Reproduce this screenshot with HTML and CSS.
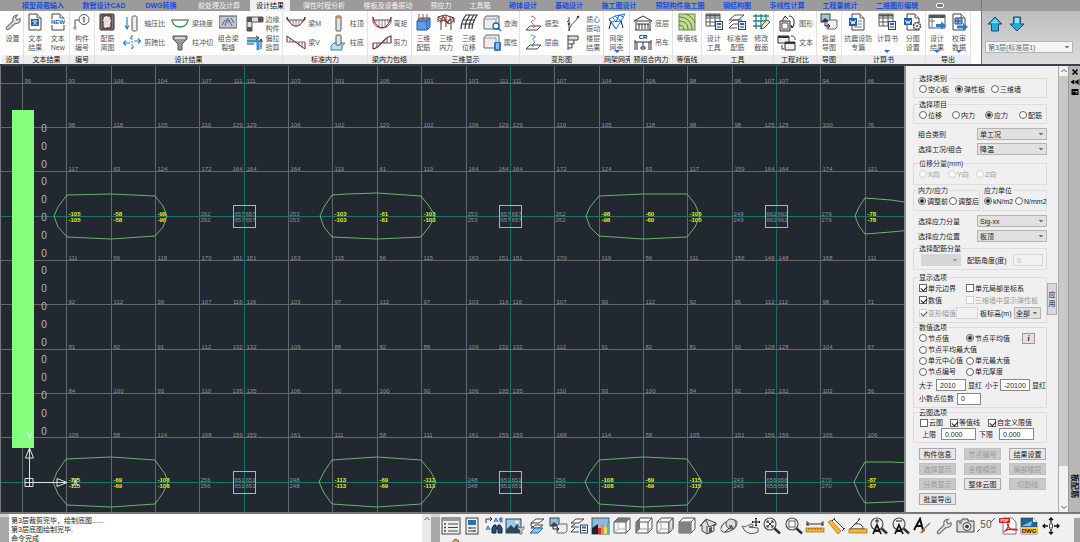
FILE: index.html
```html
<!DOCTYPE html>
<html lang="zh-CN">
<head>
<meta charset="utf-8">
<title>设计结果</title>
<link rel="stylesheet" href="styles.css">
</head>
<body>
<svg class="defs" aria-hidden="true">
  <symbol id="wrench" viewBox="0 0 18 18"><path d="M2.5 14.5 9 8C8 5 10 2 13.500 2L11.500 4.500 13 7 16 5.500C17 8.500 14.500 11 11 10.500L4.500 16.500C3 17 1.500 16 2.500 14.500Z" fill="#e4e4e4" stroke="#777" stroke-width="1.200"/></symbol>
  <symbol id="beam" viewBox="0 0 20 17"><path d="M1 5H19" stroke="#555" stroke-width="1"/><path d="M4 5V8M7 5V11M10 5V12M13 5V11M16 5V8" stroke="#667" stroke-width=".8"/></symbol>
  <symbol id="folio" viewBox="0 0 18 18"><path d="M3 1H11L15 5V17H3Z" fill="#fff" stroke="#444"/><path d="M11 1V5H15" fill="#dde" stroke="#444" stroke-width=".8"/></symbol>
  <symbol id="book" viewBox="0 0 8 9"><rect x=".5" y=".5" width="7" height="8" fill="#e8eef7" stroke="#345"/><path d="M2 3H6" stroke="#246bc0" stroke-width="2"/><path d="M2 6H6" stroke="#345"/></symbol>
  <symbol id="cube" viewBox="0 0 20 18"><path d="M2 5 6 1H18V12L14 16H2Z" fill="#f8f8f8" stroke="#555" stroke-linejoin="round"/><path d="M2 5H14V16M14 5 18 1" fill="none" stroke="#555"/></symbol>
  <symbol id="lens" viewBox="0 0 20 18"><path d="M12 11 18 16.500" stroke="#333" stroke-width="2.500"/><circle cx="8" cy="7" r="6" fill="#eee" stroke="#555" stroke-width="1.200"/></symbol>
</svg>

<header class="top">
  <div class="top-main">
    <nav class="tabs">
      <a href="#" class="w62 blue">模型荷载输入</a><a href="#" class="w60 blue">数智设计CAD</a><a href="#" class="w54 blue">DWG转换</a><a href="#" class="w62">前处理及计算</a><a href="#" class="w40 active">设计结果</a><a href="#" class="w68">弹性时程分析</a><a href="#" class="w60">楼板及设备振动</a><a href="#" class="w46">预应力</a><a href="#" class="w32">工具箱</a><a href="#" class="w54 blue">砌体设计</a><a href="#" class="w38 blue">基础设计</a><a href="#" class="w62 blue">施工图设计</a><a href="#" class="w60 blue">预制构件施工图</a><a href="#" class="w54 blue">钢结构图</a><a href="#" class="w46 blue">非线性计算</a><a href="#" class="w60 blue">工程量统计</a><a href="#" class="w54 blue">二维图形编辑</a><button class="tabmenu" aria-label="选项卡菜单"></button>
    </nav>
    <div class="ribbon">
      <section class="g g22"><div class="items">
        <button class="big"><svg viewBox="0 0 18 18"><use href="#wrench"/></svg>设置</button>
      </div><h2>设置</h2></section>

      <section class="g g46"><div class="items">
        <button class="big"><svg viewBox="0 0 18 18"><use href="#folio"/><rect x="5" y="6" width="8" height="7" fill="#1f5fae"/><path d="M6.500 8H11.500M9 7V8M7 12 11 8.500M7 8.500 11 12" stroke="#fff" stroke-width=".8"/></svg>文本<br>结果</button>
        <button class="big"><svg viewBox="0 0 18 18"><use href="#folio"/><rect x="1" y="6" width="16" height="6" fill="#fff"/><text x="9" y="11" class="newtx">NEW</text></svg>文本<br>New</button>
      </div><h2>文本结果</h2></section>

      <section class="g g25"><div class="items">
        <button class="big"><svg viewBox="0 0 18 18"><circle cx="11" cy="6.500" r="5" fill="#fff" stroke="#555"/><path d="M9.500 5 11 4V9.500" fill="none" stroke="#333"/><path d="M6 7H2V16" fill="none" stroke="#555"/><circle cx="2" cy="15" r="1.300" fill="#fff" stroke="#555" stroke-width=".7"/></svg>构件<br>编号</button>
      </div><h2>编号</h2></section>

      <section class="g g188"><div class="items">
        <button class="big"><svg viewBox="0 0 18 18"><rect x="2" y="1" width="14" height="16" rx="1" fill="#777" stroke="#333"/><rect x="5" y="3" width="8" height="12" fill="#ddd" stroke="#702020" stroke-width="1.200"/><path d="M5 8 9 3M7 15 13 7" stroke="#fff"/></svg>配筋<br>简图</button>
        <div class="pair">
          <button><svg viewBox="0 0 20 17"><rect x="10" y="1" width="5" height="15" rx="1.500" fill="#eee" stroke="#555"/><path d="M5 2V13M3 10.500 5 14 7 10.500" fill="none" stroke="#2a86d8" stroke-width="1.200"/></svg>轴压比</button>
          <button><svg viewBox="0 0 20 17"><path d="M10 1V16" stroke="#777" stroke-dasharray="2 1"/><path d="M2 9H8M12 7H18M4 6.500 1.500 9 4 11.500M16 4.500 18.500 7 16 9.500M10 2 8.500 5M10 15 11.500 12" fill="none" stroke="#2a86d8" stroke-width="1.200"/></svg>剪跨比</button>
        </div>
        <div class="pair">
          <button><svg viewBox="0 0 20 17"><path d="M1 5H19" stroke="#444"/><path d="M2 6C5 14 15 14 18 6" fill="none" stroke="#2f9a48" stroke-width="1.300"/></svg>梁挠度</button>
          <button><svg viewBox="0 0 20 17"><path d="M3 2H17V5L12 10V16H8V10L3 5Z" fill="#999" stroke="#555"/><path d="M5 4H15" stroke="#eee" stroke-width="1.500"/></svg>柱冲切</button>
        </div>
        <button class="big"><svg viewBox="0 0 18 18"><rect y="3" width="18" height="12" fill="#bcc7cf" stroke="#555"/><path d="M3 12 6 7M6 13 8 6M10 7 13 13M12 5 15 10M9 5V10" stroke="#446" stroke-width=".8" fill="none"/></svg>组合梁<br>裂缝</button>
        <div class="pair two">
          <button><svg viewBox="0 0 20 17"><path d="M3 16V2H19V7H8V16Z" fill="#ddd" stroke="#555"/><path d="M3 2H8V7H3ZM14 2H19V7H14ZM3 12H8V16H3Z" fill="#555"/></svg><span>边缘<br>构件</span></button>
          <button><svg viewBox="0 0 20 17"><path d="M3 7H14V16" fill="none" stroke="#2d9ad8" stroke-width="3"/><path d="M3 4H14M12 2 15 4 12 6M3 10H10M17 15V5M15.500 8 17 5 18.500 8" fill="none" stroke="#333"/></svg><span>偏拉<br>验算</span></button>
        </div>
      </div><h2>设计结果</h2></section>

      <section class="g g85"><div class="items">
        <div class="pair">
          <button><svg viewBox="0 0 20 17"><use href="#beam"/><path d="M1 2C5 14 15 14 19 2M1 2V5M19 2V5" fill="none" stroke="#7b2020"/></svg>梁M</button>
          <button><svg viewBox="0 0 20 17"><path d="M1 8H19M4 4V8M7 6V8M13 8V12M16 8V14" stroke="#555" fill="none" stroke-width=".8"/><path d="M1 8V2L19 15V8" fill="none" stroke="#7b2020"/></svg>梁V</button>
        </div>
        <div class="pair">
          <button><svg viewBox="0 0 20 17"><rect x="8" y="1" width="5" height="15" rx="1" fill="#e4e4e4" stroke="#555"/><path d="M8 2.500H13" stroke="#d88b39" stroke-width="2"/></svg>柱顶</button>
          <button><svg viewBox="0 0 20 17"><path d="M3 12 6 9H17L14 12V16H3Z" fill="#b9e0ef" stroke="#3680a5"/><rect x="8" y="1" width="5" height="10" rx="1" fill="#e4e4e4" stroke="#555"/></svg>柱底</button>
        </div>
      </div><h2>标准内力</h2></section>

      <section class="g g44"><div class="items">
        <div class="pair">
          <button><svg viewBox="0 0 20 17"><use href="#beam"/><path d="M1 2C4 16 16 16 19 2V7C15 15 5 15 1 7Z" fill="none" stroke="#8b2630"/></svg>弯矩</button>
          <button><svg viewBox="0 0 20 17"><path d="M1 9H19M5 9V13M8 9V11M12 6V9M15 4V9" stroke="#555"/><path d="M1 15V9M1 15C9 14 10 4 19 2V9" fill="none" stroke="#8b2630" stroke-width="1.200"/></svg>剪力</button>
        </div>
      </div><h2>梁内力包络</h2></section>

      <section class="g g108"><div class="items">
        <button class="big"><svg viewBox="0 0 18 18"><path d="M3 8 6 5H16V14L13 17H3Z" fill="#5f9de2" stroke="#225aa0"/><path d="M3 8H13V17M13 8 16 5" fill="none" stroke="#225aa0"/><path d="M5 7V1M9 7V1M13 7V1M4 5 5 7 6 5M8 5 9 7 10 5" fill="none" stroke="#d2432d"/></svg>三维<br>配筋</button>
        <button class="big"><svg viewBox="0 0 18 18"><path d="M1 4 8 2 17 5 9 9ZM4 7V17M9 2V14M14 7V17M1 4V9M17 5V10" fill="none" stroke="#444"/><path d="M1 6C5 12 7 4 9 8S14 12 17 6M3 10 6 3 11 10 14 3" fill="none" stroke="#a33" stroke-width="1.100"/></svg>三维<br>内力</button>
        <button class="big"><svg viewBox="0 0 18 18"><path d="M1 16C1 11 3 6 6 2H17C14 7 12 11 12 16M5 16C5 11 7 6 10 2M9 16C9 11 10 7 14 2M3 7H14M2 11H12" fill="none" stroke="#333" stroke-width="1.200"/></svg>三维<br>位移</button>
        <div class="pair">
          <button><svg viewBox="0 0 20 17"><path d="M2 4 4 1H17V14H2Z" fill="#eee" stroke="#666"/><path d="M2 4H14V14M14 4 17 1" fill="none" stroke="#999"/><circle cx="14" cy="11" r="3" fill="#fff" stroke="#1769b5" stroke-width="1.300"/><path d="M16 13 19 16" stroke="#1769b5" stroke-width="1.500"/></svg>查询</button>
          <button><svg viewBox="0 0 20 17"><path d="M2 4 4 1H17V14H2Z" fill="#eee" stroke="#666"/><path d="M2 4H14V14" fill="none" stroke="#999"/><rect x="12" y="8" width="7" height="9" rx="1" fill="#2a78cf"/><path d="M14 10H17M14 12H17M14 14H17" stroke="#fff"/></svg>属性</button>
        </div>
      </div><h2>三维显示</h2></section>

      <section class="g g84"><div class="items">
        <div class="pair">
          <button><svg viewBox="0 0 20 17"><path d="M3 15 7 11H18L14 15Z" fill="#fff" stroke="#444"/><path d="M10 13C16 10 5 8 9 6S14 3 8 1" fill="none" stroke="#df5148"/></svg>振型</button>
          <button><svg viewBox="0 0 20 17"><path d="M3 15 7 11H18L14 15Z" fill="#fff" stroke="#444"/><path d="M10 13V10C15 7 7 6 11 4S10 2 8 1" fill="none" stroke="#4b86d7"/></svg>层曲</button>
        </div>
        <div class="pair two">
          <button><svg viewBox="0 0 20 17"><path d="M5 2V16M5 16C6 9 11 8 14 2M3 7 5 5" fill="none" stroke="#444"/><circle cx="14" cy="2" r="1.300" fill="#444"/><circle cx="5" cy="9" r="1.300" fill="#444"/></svg><span>质心<br>振动</span></button>
          <button><svg viewBox="0 0 20 17"><path d="M4 1V16M4 2H14V6H4M10 6V10H4M8 10V14H4" fill="#ddd" stroke="#444"/></svg><span>楼层<br>结果</span></button>
        </div>
      </div><h2>变形图</h2></section>

      <section class="g g26"><div class="items">
        <button class="big arrow"><svg viewBox="0 0 18 18"><path d="M1 6 7 3 17 1 13 8 3 9ZM7 3 13 8M1 6 8 16 13 8M3 9 8 16M5 5 8 9 11 2 16 4" fill="none" stroke="#2478c9"/><path d="M3 9 1 16M13 8 15 15" stroke="#222"/></svg>网架<br>网壳</button>
      </div><h2>网架网壳</h2></section>

      <section class="g g43"><div class="items">
        <div class="pair">
          <button><svg viewBox="0 0 20 17"><path d="M1 6 10 1 19 6ZM3 7V15M17 7V15M2 15H18M4 9H16M6 9V14M9 9V14M12 9V14M15 9V14" fill="none" stroke="#333"/></svg>底层</button>
          <button><svg viewBox="0 0 20 17"><text x="10" y="5" class="crtx">CR</text><path d="M2 8H18M2 6V16M18 6V16M4 8V16M16 8V16M10 8V13M8 13H12V15H8Z" fill="none" stroke="#333"/></svg>吊车</button>
        </div>
      </div><h2>预组合内力</h2></section>

      <section class="g g29"><div class="items">
        <button class="big"><svg viewBox="0 0 18 18"><rect x="1" y="1" width="16" height="16" fill="#c2dd93" stroke="#6b8847"/><path d="M1 8C7 8 10 11 10 17M1 4C9 4 14 9 14 17M8 1C12 3 16 6 17 10M1 12C4 12 6 14 6 17" fill="none" stroke="#557b3c"/></svg>等值线</button>
      </div><h2>等值线</h2></section>

      <section class="g g72"><div class="items">
        <button class="big"><svg viewBox="0 0 18 18"><path d="M1 1H15V13H1ZM1 5H15M1 9H15M5 1V13M10 1V13" fill="#fff" stroke="#555"/><path d="M1 2.500H15" stroke="#555" stroke-width="2"/><use href="#book" x="10" y="8" width="8" height="9"/></svg>设计<br>工具</button>
        <button class="big"><svg viewBox="0 0 18 18"><path d="M1 7 7 2H16L10 7ZM1 11 5 7H14M1 15 5 11H10" fill="#fff" stroke="#555"/><path d="M1 15H9" stroke="#555"/><use href="#book" x="10" y="8" width="8" height="9"/></svg>标准层<br>配筋</button>
        <button class="big"><svg viewBox="0 0 18 18"><path d="M1 3H17M1 8H17M1 13H14M4 1V16M9 1V16M14 1V13" fill="none" stroke="#2d837e" stroke-width="1.300"/><path d="M9 16 10 12 15 7 18 9 12 15Z" fill="#f1e7b6" stroke="#555"/></svg>修改<br>截面</button>
      </div><h2>工具</h2></section>

      <section class="g g43"><div class="items">
        <div class="pair">
          <button><svg viewBox="0 0 20 17"><path d="M3 6H13V16H3ZM5 6 8 1 11 4" fill="#ddd" stroke="#333"/><path d="M5 8H11V14H5Z" fill="#fff" stroke="#744"/><path d="M12 1C17 1 19 8 15 13M17 10 15 13 14 10" fill="none" stroke="#222"/></svg>图形</button>
          <button><svg viewBox="0 0 20 17"><path d="M1 2H12V9H1ZM8 8H18V16H8Z" fill="#eee" stroke="#333"/><path d="M1 3H12M8 9H18" stroke="#333" stroke-width="2"/><path d="M14 2C18 2 18 4 18 6M5 11V15H7" fill="none" stroke="#333"/></svg>文本</button>
        </div>
      </div><h2>工程对比</h2></section>

      <section class="g g25"><div class="items">
        <button class="big"><svg viewBox="0 0 18 18"><rect x="1" y="1" width="9" height="8" fill="#9fc5dd" stroke="#444"/><path d="M1 9 5 5 10 9Z" fill="#334"/><path d="M7 9 9 7H17V14L15 16H7Z" fill="#eee" stroke="#666"/><path d="M5 10V13H10M8 11 10 13 8 15" fill="none" stroke="#222"/></svg>批量<br>导图</button>
      </div><h2>导图</h2></section>

      <section class="g g84"><div class="items">
        <button class="big"><svg viewBox="0 0 18 18"><use href="#folio"/><rect y="5" width="8" height="8" fill="#1d5fb0"/><path d="M1.500 7 3 11 4 8 5 11 6.500 7" fill="none" stroke="#fff" stroke-width=".9"/><path d="M9 8H13M9 11H13M5 14H13" stroke="#77a"/></svg>抗震设防<br>专篇</button>
        <button class="big arrow"><svg viewBox="0 0 18 18"><path d="M1 1H15V13H1ZM1 5H15M1 9H15M5 1V13M10 1V13" fill="#fff" stroke="#555"/><path d="M1 2.500H15" stroke="#555" stroke-width="2"/><use href="#book" x="10" y="8" width="8" height="9"/></svg>计算书</button>
        <button class="big"><svg viewBox="0 0 18 18"><use href="#folio"/><rect y="5" width="8" height="7" fill="#1d5fb0"/><path d="M1.500 7 3 10.500 4 8 5 10.500 6.500 7" fill="none" stroke="#fff" stroke-width=".9"/><circle cx="13" cy="13" r="3.500" fill="#eee" stroke="#444" stroke-width="1.500" stroke-dasharray="2 .7"/><circle cx="13" cy="13" r="1" fill="#444"/></svg>分图<br>设置</button>
      </div><h2>计算书</h2></section>

      <section class="g g45"><div class="items">
        <button class="big arrow"><svg viewBox="0 0 18 18"><path d="M1 2H17V15H1Z" fill="#fff" stroke="#555"/><path d="M1 3.500H17" stroke="#555" stroke-width="3"/><path d="M4 5V15M1 8H7" stroke="#777"/><path d="M8 11H13V8.500L18 12.500 13 16.500V14H8Z" fill="#2d78cb"/></svg>设计<br>结果</button>
        <button class="big arrow"><svg viewBox="0 0 18 18"><use href="#folio"/><path d="M5 5H12V11H5ZM5 8H12M8 5V11" fill="#9dbbe5" stroke="#234a85"/><path d="M7 12.500H13V10L18 14 13 18V15.500H7Z" fill="#2d78cb"/></svg>校审<br>数据</button>
      </div><h2>导出</h2></section>
    </div>
  </div>
  <aside class="floor">
    <div class="floor-nav">
      <button aria-label="上一层"><svg viewBox="0 0 16 16"><path d="M8 1 15 8H11.500V15H4.500V8H1Z" fill="#23aee2" stroke="#274a5c"/><path d="M8 3 12 7H4Z" fill="#7bd7f3"/></svg></button>
      <button aria-label="下一层"><svg viewBox="0 0 16 16"><path d="M8 15 15 8H11.500V1H4.500V8H1Z" fill="#23aee2" stroke="#274a5c"/><path d="M6 2H10V7H6Z" fill="#9be2f5"/></svg></button>
    </div>
    <select aria-label="楼层"><option>第3层(标准层1)</option></select>
  </aside>
</header>

<main class="work">
  <svg class="plan" id="plan" role="img" aria-label="楼板应力平面图"></svg>

  <div class="dock">
    <form class="panel">
      <fieldset><legend>选择类别</legend><div class="row c3">
        <label><input type="radio" name="kind">空心板</label><label><input type="radio" name="kind" checked>弹性板</label><label><input type="radio" name="kind">三维墙</label>
      </div></fieldset>
      <fieldset class="mt2"><legend>选择项目</legend><div class="row c4">
        <label><input type="radio" name="item">位移</label><label><input type="radio" name="item">内力</label><label><input type="radio" name="item" checked>应力</label><label><input type="radio" name="item">配筋</label>
      </div></fieldset>
      <div class="pick mt4"><label for="combo">组合类别</label><select id="combo"><option>单工况</option></select></div>
      <div class="pick mt3"><label for="load">选择工况/组合</label><select id="load"><option>降温</option></select></div>
      <fieldset class="mt4 tall" disabled><legend>位移分量(mm)</legend><div class="row c5">
        <label><input type="radio" name="dir">X向</label><label><input type="radio" name="dir">Y向</label><label><input type="radio" name="dir">Z向</label>
      </div></fieldset>
      <div class="split">
        <fieldset><legend>内力/应力</legend><div class="row tight">
          <label><input type="radio" name="adj" checked>调整前</label><label><input type="radio" name="adj">调整后</label>
        </div></fieldset>
        <fieldset><legend>应力单位</legend><div class="row tight">
          <label><input type="radio" name="unit" checked>kN/m2</label><label><input type="radio" name="unit">N/mm2</label>
        </div></fieldset>
      </div>
      <div class="pick mt4"><label for="comp">选择应力分量</label><select id="comp"><option>Sig-xx</option></select></div>
      <div class="pick mt3"><label for="pos">选择应力位置</label><select id="pos"><option>板顶</option></select></div>
      <fieldset class="mt2"><legend>选择配筋分量</legend><div class="row rebar">
        <select disabled aria-label="选择配筋分量"><option></option></select><label for="ang">配筋角度(度)</label><input id="ang" type="text" value="0" disabled>
      </div></fieldset>
      <fieldset class="mt3"><legend>显示选项</legend>
        <div class="row c2"><label><input type="checkbox" checked>单元边界</label><label><input type="checkbox">单元局部坐标系</label></div>
        <div class="row c2"><label><input type="checkbox" checked>数值</label><label class="off"><input type="checkbox" disabled>三维墙中显示弹性板</label></div>
        <div class="row height"><label class="off"><input type="checkbox" checked disabled>变形幅值</label><input type="text" disabled aria-label="变形幅值"><label for="lvl">板标高(m)</label><select id="lvl"><option>全部</option></select></div>
      </fieldset>
      <fieldset><legend>数值选项</legend>
        <div class="row c2 info"><label><input type="radio" name="val">节点值</label><label><input type="radio" name="val" checked>节点平均值</label><button type="button" class="i">i</button></div>
        <div class="row low"><label><input type="radio" name="val">节点平均最大值</label></div>
        <div class="row c2 low"><label><input type="radio" name="val">单元中心值</label><label><input type="radio" name="val">单元最大值</label></div>
        <div class="row c2 low"><label><input type="radio" name="val">节点编号</label><label><input type="radio" name="val">单元厚度</label></div>
        <div class="row limits"><label for="gt">大于</label><input id="gt" type="text" value="2010"><span>显红</span><label for="lt">小于</label><input id="lt" type="text" value="-20100"><span>显红</span></div>
        <div class="row digits"><label for="dg">小数点位数</label><input id="dg" type="text" value="0"></div>
      </fieldset>
      <fieldset><legend>云图选项</legend>
        <div class="row cloud"><label><input type="checkbox">云图</label><label><input type="checkbox" checked>等值线</label><label><input type="checkbox" checked>自定义限值</label></div>
        <div class="row range"><label for="up">上限</label><input id="up" type="text" value="0.000"><label for="dn">下限</label><input id="dn" type="text" value="0.000"></div>
      </fieldset>
      <div class="acts">
        <button type="button">构件信息</button><button type="button" disabled>节点编号</button><button type="button">结果设置</button>
        <button type="button" disabled>选择显示</button><button type="button" disabled>全楼模型</button><button type="button" disabled>局部楼层</button>
        <button type="button" disabled>分类显示</button><button type="button">整体云图</button><button type="button" disabled>切割线</button>
        <button type="button">批量导出</button>
      </div>
      <button type="button" class="apply">应用</button>
    </form>
    <div class="vbar"><svg viewBox="0 0 10 10"><path d="M2.500 6 5 3.500 7.500 6" fill="none" stroke="#555"/></svg><i></i><svg viewBox="0 0 10 10"><path d="M2.500 4 5 6.500 7.500 4" fill="none" stroke="#555"/></svg></div>
    <div class="rail">
      <svg viewBox="0 0 10 10"><path d="M2.500 2.500 7.500 7.500M7.500 2.500 2.500 7.500" stroke="#000" stroke-width="1.600"/></svg>
      <svg viewBox="0 0 10 10"><path d="M1 5 4 3V7ZM9 2V8M5 5 8 3V7Z" fill="#000" stroke="#000" stroke-width=".7"/></svg>
      <svg viewBox="0 0 10 10"><rect x="1.500" y="2" width="7" height="6"/><path d="M3 4.500H4.500M5.500 4.500H7.500M5.500 6H7.500" stroke="#fff" stroke-width=".7"/></svg>
      <span>板配筋</span>
    </div>
  </div>
</main>

<footer class="foot">
  <div class="grip"></div>
  <div class="log"><p>第3层裁剪完毕，绘制底图......</p><p>第3层底图绘制完毕.</p><p>命令完成</p></div>
  <div class="logbar"><svg viewBox="0 0 10 10"><path d="M2.500 6 5 3.500 7.500 6" fill="none" stroke="#555"/></svg></div>
  <div class="grip"></div>
  <div class="tools">
    <button aria-label="列表"><svg viewBox="0 0 20 18"><rect x="1" y="1" width="18" height="16" fill="#eee" stroke="#444"/><path d="M1 3H19" stroke="#999" stroke-width="2"/><path d="M7 7H17M7 10.500H17M7 14H17" stroke="#444"/><path d="M3 7H5M3 10.500H5M3 14H5" stroke="#444" stroke-width="1.500"/></svg></button>
    <button aria-label="属性"><svg viewBox="0 0 20 18"><rect x="4" y="1" width="12" height="16" fill="#eee" stroke="#444"/><rect x="6" y="3" width="8" height="5" fill="#2b6cb5"/><path d="M6 11H14M6 14H14M8 10V12M12 13V15" stroke="#444"/></svg></button>
    <button aria-label="查找"><svg viewBox="0 0 20 18"><path d="M2 6V2H8M6 0 8 2 6 4" fill="none" stroke="#333"/><path d="M10 5 12 1 14 5M11 4H13M16 1V5H18V3H16V1H18V3" fill="none" stroke="#2a66ae"/><path d="M2 13 4 9 6 13M3 12H5" fill="none" stroke="#2a66ae"/><path d="M8 16V11L10 8H12V10H14V8H16L18 11V16H14V12H12V16Z" fill="#225186" stroke="#123"/></svg></button>
    <button aria-label="图像"><svg viewBox="0 0 20 18"><rect x="1" y="2" width="15" height="14" fill="#9ccbe8" stroke="#345"/><path d="M1 13 6 8 9 11 12 7 16 12V16H1Z" fill="#345"/><circle cx="12" cy="5" r="1.500" fill="#fff"/><path d="M13 9V12L15 13V17H17V13L19 12V9L17 11H15Z" fill="#ddd" stroke="#555" stroke-width=".7"/></svg></button>
    <button aria-label="图层"><svg viewBox="0 0 20 18"><path d="M4 6 9 2H17L12 6ZM4 6V9L7 10M4 11 9 8H16L12 11Z" fill="#fff" stroke="#444"/><path d="M3 16 8 11H16L11 16Z" fill="#8bc4ed" stroke="#246ba7"/></svg></button>
    <button aria-label="图转块"><svg viewBox="0 0 20 18"><rect x="2" y="1" width="9" height="8" fill="#8fbddd" stroke="#444"/><path d="M2 9 6 5 11 9Z" fill="#345"/><path d="M9 9 11 7H19V14L17 16H9Z" fill="#eee" stroke="#666"/><path d="M5 9V12H11M9 10 11 12 9 14" fill="none" stroke="#222"/></svg></button>
    <button aria-label="层表"><svg viewBox="0 0 20 18"><path d="M2 6 7 2H15L10 6ZM2 10 6 7M2 10H10M2 15 6 11M2 15H10" fill="#fff" stroke="#444"/><use href="#book" x="11" y="7" width="8" height="10"/></svg></button>
    <button aria-label="颜色"><svg viewBox="0 0 20 18"><rect x="1" y="1" width="17" height="16" fill="#8abce0" stroke="#456"/><path d="M1 17V11L7 7V17Z" fill="#222"/><path d="M7 11H10V17H7Z" fill="#d92b2b"/><path d="M10 7H13V17H10Z" fill="#ee922b"/><path d="M13 10H16V17H13Z" fill="#f5df54"/><path d="M16 6H18V17H16Z" fill="#60b2a4"/></svg></button>
    <button aria-label="顶视"><svg viewBox="0 0 20 18"><use href="#cube"/><path d="M2 5 6 1H18L14 5Z" fill="#777"/><path d="M6 5V12H14M2 16 6 12" fill="none" stroke="#bbb"/></svg></button>
    <button aria-label="左视"><svg viewBox="0 0 20 18"><use href="#cube"/><path d="M2 5 6 1V12L2 16Z" fill="#777"/><path d="M6 12H18" stroke="#999"/></svg></button>
    <button aria-label="右视"><svg viewBox="0 0 20 18"><use href="#cube"/><path d="M14 5 18 1V12L14 16Z" fill="#ddd" stroke="#555"/><path d="M6 1V12H18M2 16 6 12" fill="none" stroke="#aaa"/></svg></button>
    <button aria-label="前视"><svg viewBox="0 0 20 18"><use href="#cube"/><path d="M2 5H14V16H2Z" fill="#7d8288"/></svg></button>
    <button aria-label="主视图"><svg viewBox="0 0 20 18"><path d="M2 9 8 2 18 6V8L16 8V14L9 17 4 14V8Z" fill="#ddd" stroke="#444"/><path d="M2 9 8 3 11 10 18 7M9 17V9" fill="none" stroke="#444"/><path d="M11 11 14 10V15L11 16Z" fill="#555"/></svg></button>
    <button aria-label="动态观察"><svg viewBox="0 0 20 18"><ellipse cx="10" cy="9" rx="9" ry="5" transform="rotate(-30 10 9)" fill="#eee" stroke="#555"/><circle cx="12" cy="7" r="5" fill="#ddd" stroke="#555"/><path d="M6 15 13 9M10 9H13V12" fill="none" stroke="#222"/></svg></button>
    <button aria-label="平移"><svg viewBox="0 0 20 18"><path d="M1 9C5 11 6 8 11 7L12 9 8 10 17 11V15C10 18 7 16 4 14Z" fill="#eee" stroke="#555"/><path d="M15 1V9M11 5H19M14 2 15 1 16 2M14 8 15 9 16 8M12 4 11 5 12 6M18 4 19 5 18 6" fill="none" stroke="#111"/></svg></button>
    <button aria-label="范围缩放"><svg viewBox="0 0 20 18"><use href="#lens"/><path d="M5 4 11 10M11 4 5 10M5 6V4H7M9 4H11V6M11 8V10H9M7 10H5V8" fill="none" stroke="#333"/></svg></button>
    <button aria-label="窗口缩放"><svg viewBox="0 0 20 18"><use href="#lens"/><rect x="5" y="4" width="6" height="6" fill="#fff" stroke="#666"/></svg></button>
    <button aria-label="距离"><svg viewBox="0 0 20 18"><path d="M2 7H18M2 4V9M18 4V9M4 5.500 2 7 4 8.500M16 5.500 18 7 16 8.500" fill="none" stroke="#333"/><rect x="1" y="11" width="18" height="4" fill="#f4b733" stroke="#9a6512" stroke-width=".7"/><path d="M4 11V13M7 11V13M10 11V13M13 11V13M16 11V13" stroke="#744" stroke-width=".7"/></svg></button>
    <button aria-label="对齐距离"><svg viewBox="0 0 20 18"><path d="M8 2 18 12M6 4 9 1M16 14 19 11" stroke="#333"/><path d="M2 5 5 3 15 14 12 17Z" fill="#f4b733" stroke="#9a6512" stroke-width=".7"/></svg></button>
    <button aria-label="角度"><svg viewBox="0 0 20 18"><path d="M2 12 12 2M7 7C12 6 15 8 15 12M12 2 10 2M17 12H3" fill="none" stroke="#333"/><rect x="1" y="12" width="18" height="4" fill="#f4b733" stroke="#9a6512" stroke-width=".7"/></svg></button>
    <button aria-label="放大文字"><svg viewBox="0 0 20 18"><use href="#lens"/><path d="M8 2V6M6 4H10" stroke="#222"/><path d="M4 17 8 8 12 17M6 14H10" fill="none" stroke="#111" stroke-width="1.800"/></svg></button>
    <button aria-label="缩小文字"><svg viewBox="0 0 20 18"><use href="#lens"/><path d="M5 4H11" stroke="#222"/><path d="M4 17 8 8 12 17M6 14H10" fill="none" stroke="#111" stroke-width="1.800"/></svg></button>
    <button aria-label="文字样式"><svg viewBox="0 0 20 18"><path d="M2 13 8 2 11 13M4 9H10" fill="none" stroke="#111" stroke-width="2"/><path d="M11 13 18 6" stroke="#888" stroke-width="1.500"/><path d="M7 16C10 16 9 12 12 12S12 17 7 16Z" fill="#b85a22"/></svg></button>
    <button aria-label="设置"><svg viewBox="0 0 20 18"><use href="#wrench"/></svg></button>
    <button aria-label="截图"><svg viewBox="0 0 20 18"><path d="M2 4H7V2H13V4H19V15H2Z" fill="#ddd" stroke="#444"/><circle cx="12" cy="9.500" r="4" fill="#f8f8f8" stroke="#444"/><circle cx="12" cy="9.500" r="2" fill="#444"/><path d="M4 6H7" stroke="#444"/></svg></button>
    <button class="num"><svg viewBox="0 0 20 18" aria-hidden="true"><path d="M1 15 4 12M15 5 19 1" stroke="#555"/></svg><span>50</span></button>
    <button aria-label="导出PDF"><svg viewBox="0 0 20 18"><path d="M5 1H14L18 5V17H5Z" fill="#fff" stroke="#777"/><rect x="1" y="1" width="11" height="5" fill="#d51f2b"/><text x="6.500" y="5" class="pdftx">PDF</text><path d="M6 15C10 12 11 8 10 7S9 13 17 13 10 10 6 15Z" fill="none" stroke="#d51f2b" stroke-width="1.200"/></svg></button>
    <button aria-label="导出DWG"><svg viewBox="0 0 20 18"><path d="M2 1H14L18 5V17H2Z" fill="#246297" stroke="#333" stroke-width=".6"/><path d="M14 1V5H18Z" fill="#fff"/><path d="M3 9 13 4 12 9Z" fill="#83bee0"/><rect x="2" y="10" width="16" height="7" fill="#ffc928"/><text x="10" y="16" class="dwgtx">DWG</text></svg></button>
    <button aria-label="移动"><svg viewBox="0 0 20 18"><path d="M10 1V6M10 12V17M2 9H7M13 9H18M4 7 2 9 4 11M16 7 18 9 16 11M8 3 10 1 12 3M8 15 10 17 12 15" fill="none" stroke="#111" stroke-width="1.300"/><rect x="8.500" y="7" width="3" height="4" fill="#fff" stroke="#555"/></svg></button>
    <button aria-label="编辑"><svg viewBox="0 0 20 18"><path d="M9 8 14 2 18 4 14 8Z" fill="#e6b742" stroke="#555"/></svg></button>
  </div>
  <div class="toolbar-end"></div>
</footer>
<script src="plan.js"></script>
</body>
</html>
```
FILE: styles.css
```css
* { box-sizing: border-box; }
body {
  margin: 0; height: 100vh; display: flex; flex-direction: column; overflow: hidden;
  font-family: "Liberation Sans", "Noto Sans CJK SC", sans-serif;
  font-size: 7px; line-height: 9px; color: #222; background: #a0a0a0;
}
button, input, select { font: inherit; color: inherit; margin: 0; padding: 0; border-radius: 0; }
button { background: none; border: 0; white-space: nowrap; }
h2, p { margin: 0; font-size: 7px; font-weight: normal; }
.defs { position: absolute; width: 0; height: 0; }
text { font-family: "Liberation Sans", sans-serif; }

/* ribbon */
.top { display: flex; flex: none; border-bottom: 2px solid #3c424a; background: #a0a0a0; }
.top-main { flex: 1; min-width: 0; }
.tabs { display: flex; height: 11px; padding-left: 12px; align-items: stretch; background: #9b9b9b; }
.tabs a { flex: none; color: #f4f4f4; text-decoration: none; text-align: center; white-space: nowrap; line-height: 12px; }
.tabs a.blue { color: #1650e0; font-weight: bold; }
.tabs a.active { background: #f0f0f0; color: #111; }
.w32 { width: 32px; } .w38 { width: 38px; } .w40 { width: 40px; } .w46 { width: 46px; }
.w54 { width: 54px; } .w60 { width: 60px; } .w62 { width: 62px; } .w68 { width: 68px; }
.tabmenu { width: 8px; height: 5px; margin: 3px 0 0 12px; border: 1px solid #fff; border-radius: 2px; background: #777; }
.ribbon { display: flex; padding-left: 2px; background: #fdfdfd; }
.g { flex: none; border-right: 1px solid #e2e2e2; }
.g22 { width: 22px; } .g25 { width: 25px; } .g26 { width: 26px; } .g29 { width: 29px; }
.g43 { width: 43px; } .g44 { width: 44px; } .g45 { width: 45px; } .g46 { width: 46px; }
.g72 { width: 72px; } .g84 { width: 84px; } .g85 { width: 85px; } .g108 { width: 108px; } .g188 { width: 188px; }
.g h2 { height: 9px; background: #ececec; text-align: center; color: #111; white-space: nowrap; }
.items { display: flex; height: 44px; justify-content: space-around; color: #555; }
.big { position: relative; display: block; min-width: 20px; padding-top: 2px; text-align: center; align-self: flex-start; }
.big svg { display: block; width: 18px; height: 18px; margin: 0 auto 3px; }
.big.arrow::after {
  content: ""; position: absolute; left: 50%; top: 39px; margin-left: -3px;
  border: 3px solid transparent; border-top-color: #2464d8; border-bottom: 0;
}
.pair { display: grid; grid-template-rows: 19px 19px; padding-top: 3px; }
.pair button { display: flex; align-items: center; gap: 2px; text-align: left; }
.pair svg { width: 20px; height: 17px; flex: none; }
.newtx { font-size: 6px; font-weight: bold; fill: #1f5fae; text-anchor: middle; }
.crtx { font-size: 6px; font-weight: bold; fill: #111; text-anchor: middle; }
.pdftx { font-size: 4px; font-weight: bold; fill: #fff; text-anchor: middle; }
.dwgtx { font-size: 6px; font-weight: bold; fill: #222; text-anchor: middle; }
.floor { width: 99px; padding: 15px 7px 0 3px; border-left: 1px solid #777; background: linear-gradient(#9b9b9b 11px, #bdbdbd 11px, #dedede); }
.floor-nav { display: flex; gap: 6px; padding-left: 2px; margin-bottom: 8px; }
.floor-nav svg { display: block; width: 16px; height: 18px; }
select {
  appearance: none; height: 12px; border: 1px solid #b4b4b4; padding: 0 9px 0 2px; width: 100%; min-width: 0; overflow: hidden;
  background: linear-gradient(45deg, transparent 50%, #777 50%) right 5px top 4px / 3px 2px no-repeat,
    linear-gradient(-45deg, transparent 50%, #777 50%) right 2px top 4px / 3px 2px no-repeat, #e1e1e1;
}
.floor select { background-color: #f4f4f4; color: #666; }

/* drawing and side panel */
.work { flex: 1; min-height: 0; display: flex; }
.plan { flex: 1; min-width: 0; height: 100%; background: #212830; border-left: 1px solid #777; }
.plan text { font-size: 6px; fill: #8f949a; }
.plan .stress { fill: #ecec10; font-weight: bold; }
.plan .column { fill: none; stroke: #c8c814; }
.plan .scale { font-size: 10px; fill: #b8bcc0; }
.plan .axis { font-size: 10px; fill: #e8e8e8; }
.dock { flex: none; display: flex; width: 176px; border-left: 2px solid #8c8c8c; background: #f0f0f0; }
.panel { position: relative; flex: 1; min-width: 0; padding: 8px 11px 0 7px; white-space: nowrap; color: #1c1c1c; }
fieldset { margin: 0; padding: 0 0 2px 5px; border: 1px solid #dcdcdc; min-width: 0; }
legend { padding: 0 1px; margin-left: -1px; line-height: 9px; }
.row { display: grid; height: 12px; align-items: center; justify-content: start; }
.row label { display: flex; align-items: center; gap: 1px; }
.tall { padding-bottom: 4px; }
.c2 { grid-template-columns: 47px 1fr; justify-content: stretch; }
.c3 { grid-template-columns: 36px 36px 36px; }
.c4 { grid-template-columns: 33px 33px 34px 30px; }
.c5 { grid-template-columns: 29px 28px 28px; }
.tight { grid-template-columns: 31px 31px; }
.split { display: grid; grid-template-columns: 67px 1fr; gap: 2px; margin-top: 1px; }
.split fieldset { padding-bottom: 3px; padding-left: 4px; }
.split fieldset + fieldset { padding-left: 1px; }
.split fieldset + fieldset .row { grid-template-columns: 31px 31px; }
.mt2 { margin-top: 2px; } .mt3 { margin-top: 3px; } .mt4 { margin-top: 4px; }
.pick { display: grid; grid-template-columns: 59px 1fr; align-items: center; padding-left: 5px; }
input[type="radio"], input[type="checkbox"] { appearance: none; flex: none; width: 8px; height: 8px; border: 1px solid #666; background: #fff; }
input[type="radio"] { border-radius: 50%; }
input[type="radio"]:checked { background: radial-gradient(circle, #222 0 1px, #fff 3px); }
input[type="checkbox"]:checked::before {
  content: ""; display: block; width: 5px; height: 3px; margin: 1px 0 0 1px;
  border: solid #222; border-width: 0 0 1px 1px; transform: rotate(-45deg);
}
:disabled, fieldset:disabled label, .off { color: #999; }
fieldset:disabled legend { color: #333; }
input:disabled { border-color: #c4c4c4; opacity: .7; }
input[type="text"] { width: 100%; height: 12px; padding: 0 3px; border: 1px solid #888; background: #fff; min-width: 0; }
input[type="text"]:disabled { border-color: #ccc; background: #f3f3f3; }
.rebar { height: 14px; grid-template-columns: 40px 40px 30px; gap: 6px; padding-left: 2px; }
select:disabled { border-color: #ccc; background-color: #ccc; }
.height { height: 14px; grid-template-columns: 35px 22px 32px 27px; column-gap: 2px; }
.height select { padding-left: 1px; }
.row.info { height: 12px; grid-template-columns: 47px 56px 13px; justify-content: start; }
.i { width: 13px; height: 11px; border: 1px solid #999; background: #e2e2e2; font: italic bold 8px/9px "Liberation Serif", serif; }
.low { height: 11px; }
.limits { height: 14px; grid-template-columns: 15px 30px 15px 13px 30px 14px; column-gap: 2px; padding-top: 2px; }
.digits { height: 14px; grid-template-columns: 37px 24px; column-gap: 1px; padding-top: 1px; }
.cloud { grid-template-columns: 30px 38px 48px; padding-left: 1px; height: 11px; }
.range { grid-template-columns: 16px 35px 17px 35px; column-gap: 3px; padding-left: 3px; }
.acts { display: grid; grid-template-columns: repeat(3, 37px); gap: 3px 8px; margin: 5px 0 0 6px; }
.acts button { height: 12px; line-height: 9px; border: 1px solid #a8a8a8; background: #e6e6e6; }
.acts button:disabled { background: #c9c9c9; border-color: #c1c1c1; }
.apply { position: absolute; right: 1px; top: 217px; width: 10px; height: 32px; border: 1px solid #aaa; background: #d8d8d8; white-space: normal; }
.vbar { flex: none; display: flex; flex-direction: column; width: 10px; background: #f2f2f2; border-left: 1px solid #aaa; }
.vbar svg, .rail svg, .logbar svg { display: block; width: 10px; height: 10px; }
.vbar i { flex: 1; margin-bottom: 36px; background: #c9c9c9; }
.rail { flex: none; display: flex; flex-direction: column; width: 12px; align-items: center; padding: 1px 0 14px; background: #b7b7b7; border-left: 1px solid #999; }
.rail span { margin-top: auto; writing-mode: vertical-rl; text-orientation: sideways; font-size: 8px; font-weight: bold; color: #111; }

/* command line and toolbar */
.foot { flex: none; display: flex; height: 30px; border-top: 2px solid #777; background: #f0f0f0; }
.grip { flex: none; width: 9px; background: #a9a9a9; border-top: 3px solid #d6d6d6; }
.log { flex: none; width: 413px; padding: 2px 0 0 2px; background: #fff; color: #222; }
.logbar { flex: none; width: 9px; background: #e9e9e9; }
.tools { flex: 1; display: grid; grid-template-columns: repeat(29, 1fr); grid-auto-rows: 20px; padding: 2px 12px 0 1px; overflow: hidden; align-content: start; }
.tools button { position: relative; }
.tools svg { display: block; width: 20px; height: 18px; }
.tools .num span { position: absolute; left: 4px; top: 4px; font-size: 10px; color: #555; }
.toolbar-end { width: 6px; margin-top: 4px; background: #a4a4a4; }
```
FILE: plan.js
```js
const NS = 'http://www.w3.org/2000/svg';
const plan = document.getElementById('plan');

function add(tag, attrs, text) {
  const el = document.createElementNS(NS, tag);
  for (const key in attrs) el.setAttribute(key, attrs[key]);
  if (text !== undefined) el.textContent = text;
  plan.appendChild(el);
}

const PITCH = 44.35;
const gx = k => Math.round(21 + PITCH * k) + 0.5;
const gy = k => Math.round(16.5 + PITCH * k) + 0.5;
const COLUMN_AXES = [5, 11, 17];
const STRESS_ROWS = [3, 9];

// grid and axes
for (let k = 0; k < 20; k++) {
  add('line', { x1: gx(k), y1: 0, x2: gx(k), y2: '100%', stroke: COLUMN_AXES.includes(k) ? '#12706f' : '#62686e' });
}
for (let k = 0; k < 10; k++) {
  add('line', { x1: 0, y1: gy(k), x2: '100%', y2: gy(k), stroke: STRESS_ROWS.includes(k) ? '#167775' : '#62686e' });
}

// node values, one entry for each grid line; axis columns carry a value on both sides
const rows = {
  0: [96, 93, 106, 104, 107, 111, 103, 101, 106, 101, 103, 111, 107, 104, 106, 98, 96, 107, 94, 66],
  1: ['', 98, 118, 105, 110, 129, 106, 102, 120, 102, 106, 129, 110, 105, 118, 98, 98, 125, 100, 76],
  2: ['', 117, 63, 124, 172, 164, 164, 119, 61, 119, 164, 164, 172, 124, 63, 117, 159, 164, 174, 121],
  4: ['', 111, 56, 119, 170, 151, 163, 115, 56, 115, 163, 151, 170, 119, 56, 111, 156, 148, 168, 111],
  5: ['', 92, 112, 99, 107, 116, 103, 97, 112, 97, 103, 116, 107, 99, 112, 92, 95, 112, 98, 71],
  6: ['', 81, 82, 91, 112, 132, 109, 88, 82, 88, 109, 132, 112, 91, 82, 81, 92, 128, 104, 67],
  7: ['', 84, 100, 93, 110, 135, 106, 90, 100, 90, 106, 135, 110, 93, 100, 84, 92, 132, 102, 56],
  8: ['', 105, 58, 114, 168, 159, 161, 111, 58, 111, 161, 159, 168, 114, 58, 105, 151, 156, 166, 106]
};
for (const r in rows) {
  rows[r].forEach((v, k) => {
    if (v === '') return;
    add('text', { x: gx(k) + 2, y: gy(+r) - 1 }, v);
    if (COLUMN_AXES.includes(k)) add('text', { x: gx(k) - 2, y: gy(+r) - 1, 'text-anchor': 'end' }, v);
  });
}

// stress rows
const stress = {
  3: { y: [-105, -58, -98, null, null, null, -103, -61, -103, null, null, null, -98, -60, -105, null, null, null, -78], g: { 4: 262, 5: 657, 6: 253, 10: 253, 11: 657, 12: 262, 16: 249, 17: 662, 18: 279 } },
  9: { y: [-115, -69, -108, null, null, null, -113, -69, -113, null, null, null, -108, -69, -115, null, null, null, -87], g: { 4: 256, 5: 651, 6: 248, 10: 248, 11: 651, 12: 256, 16: 243, 17: 656, 18: 270 } }
};
for (const r in stress) {
  const y = gy(+r);
  for (const dy of [-1, 5]) {
    stress[r].y.forEach((v, i) => {
      if (v !== null) add('text', { x: gx(i + 1) + 2, y: y + dy, class: 'stress' }, v);
    });
    for (const k in stress[r].g) {
      add('text', { x: gx(+k) + 1, y: y + dy }, stress[r].g[k]);
      if (COLUMN_AXES.includes(+k)) add('text', { x: gx(+k), y: y + dy, 'text-anchor': 'end' }, stress[r].g[k]);
    }
  }
  for (const k of COLUMN_AXES) {
    add('rect', { x: gx(k) - 11, y: y - 11, width: 22, height: 22, class: 'column' });
  }
}

// contour lines
const contours = [
  '53,150 57,141 66,129 110,128 154,130 162,140 166,150 162,161 154,170 110,173 66,171 57,161',
  '319,150 323,141 331,129 346,128 376,127 420,130 428,140 434,150 428,161 420,171 376,173 331,171 323,161',
  '585,150 589,141 598,130 642,128 686,128 694,138 699,150 694,161 686,171 642,173 598,170 589,161',
  '854,150 858,141 864,132 890,134 910,137 910,164 890,166 864,168 858,160',
  '52,416 56,406 65,393 110,391 154,394 164,408 167,416 162,427 154,438 110,441 66,439 57,428',
  '318,416 323,406 331,394 376,391 420,394 430,406 435,416 428,429 420,438 376,441 331,438 323,427',
  '584,416 589,406 598,394 642,391 686,393 695,406 701,416 694,429 686,439 642,441 598,438 589,427',
  '853,416 858,406 864,396 890,396 910,397 910,435 890,436 864,437 858,428'
];
contours.forEach(points => add('polygon', { points, fill: 'none', stroke: '#69b66d' }));

// colour scale
add('rect', { x: 11, y: 44, width: 22, height: 338, fill: '#84ff7e' });
for (let k = 0; k < 18; k++) {
  add('text', { x: 43, y: Math.round(66 + 17.8 * k), class: 'scale', 'text-anchor': 'middle' }, '0');
}

// coordinate system mark
add('path', { d: 'M24 412.5H32V420.5H24ZM24 416.5H66M28.500 420V382M24.500 392 28.500 382 32.500 392ZM56 412.5 66 416.5 56 420.5Z', fill: 'none', stroke: '#dfe5e5' });
add('text', { x: 25, y: 374, class: 'axis' }, 'Y');
add('text', { x: 71, y: 420, class: 'axis' }, 'X');
```
